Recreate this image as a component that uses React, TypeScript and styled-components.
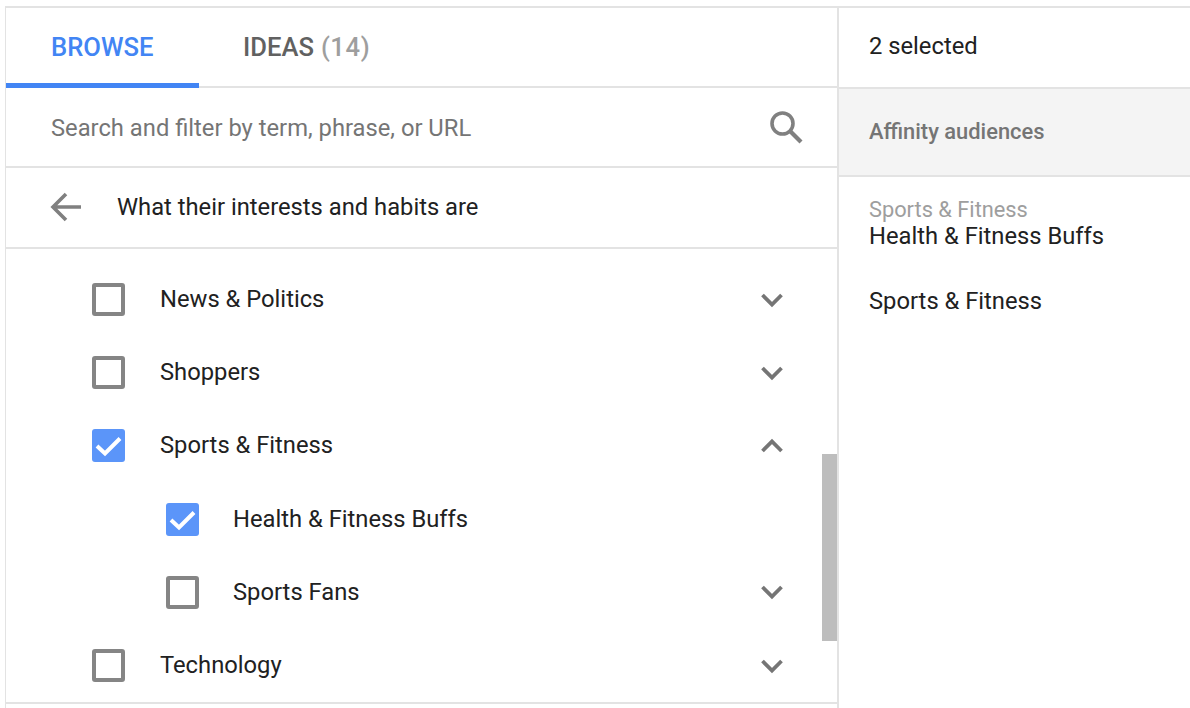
import React from "react";
import styled, { createGlobalStyle } from "styled-components";

const Global = createGlobalStyle`
  html, body { margin: 0; padding: 0; background: #fff; overflow: hidden; }
  body { font-family: Roboto, "Liberation Sans", sans-serif; }
`;

const Page = styled.div`
  width: 1190px;
  height: 708px;
  box-sizing: border-box;
  padding: 6px 0 0 5px;
  overflow: hidden;
  display: flex;
  background: #fff;
`;

const LeftPanel = styled.div`
  width: 834px;
  height: 702px;
  box-sizing: border-box;
  border: 2px solid #e3e3e3;
  border-left-width: 1px;
  border-bottom: none;
  display: flex;
  flex-direction: column;
  flex: none;
`;

const TabBar = styled.div`
  height: 80px;
  box-sizing: border-box;
  border-bottom: 2px solid #e3e3e3;
  display: flex;
  flex: none;
`;

const Tab = styled.div<{ $active?: boolean }>`
  height: 80px;
  box-sizing: border-box;
  padding-top: 2px;
  display: flex;
  align-items: center;
  font-size: 25.6px;
  font-weight: 500;
  color: ${(p) => (p.$active ? "#4285f4" : "#616161")};
  border-bottom: ${(p) => (p.$active ? "5px solid #4285f4" : "5px solid transparent")};
  ${(p) => (p.$active ? "width: 193px; padding-left: 45px;" : "padding-left: 44px;")}
`;

const Count = styled.span`
  color: #9e9e9e;
  margin-left: 7px;
  letter-spacing: 0.6px;
`;

const SearchRow = styled.div`
  height: 80px;
  box-sizing: border-box;
  border-bottom: 2px solid #e3e3e3;
  padding: 0 34px 0 45px;
  display: flex;
  align-items: center;
  justify-content: space-between;
  flex: none;
  font-size: 23.75px;
  color: #757575;
`;

const SearchText = styled.span`
  margin-top: 2px;
`;

const BackRow = styled.div`
  height: 81px;
  box-sizing: border-box;
  border-bottom: 2px solid #e3e3e3;
  padding-left: 44px;
  padding-bottom: 2px;
  display: flex;
  align-items: center;
  gap: 35px;
  flex: none;
  font-size: 23.75px;
  color: #212121;
`;

const ListArea = styled.div`
  flex: 1;
  position: relative;
  overflow: hidden;
  padding-top: 14px;
  box-sizing: border-box;
  border-bottom: 2px solid #e3e3e3;
`;

const Footer = styled.div`
  height: 4px;
  flex: none;
`;

const Row = styled.div<{ $nested?: boolean }>`
  height: 73.2px;
  display: flex;
  align-items: center;
  padding-left: ${(p) => (p.$nested ? 160 : 86)}px;
  padding-right: 53px;
  font-size: 23.75px;
  color: #212121;
`;

const Box = styled.div<{ $checked?: boolean }>`
  width: 33px;
  height: 33px;
  box-sizing: border-box;
  border-radius: 3px;
  flex: none;
  display: flex;
  align-items: center;
  justify-content: center;
  background: ${(p) => (p.$checked ? "#5b95f9" : "#fff")};
  border: ${(p) => (p.$checked ? "none" : "4px solid #858585")};
`;

const Label = styled.div<{ $nested?: boolean }>`
  margin-left: ${(p) => (p.$nested ? 34 : 35)}px;
  margin-top: -1px;
  flex: 1;
`;

const Scrollbar = styled.div`
  position: absolute;
  right: 0;
  top: 205px;
  width: 15px;
  height: 187px;
  background: #bdbdbd;
`;

const RightPanel = styled.div`
  flex: 1;
  display: flex;
  flex-direction: column;
  border-top: 2px solid #e3e3e3;
  height: 698px;
  box-sizing: border-box;
`;

const SelectedHead = styled.div`
  height: 79px;
  box-sizing: border-box;
  padding: 0 0 3px 30px;
  display: flex;
  align-items: center;
  font-size: 23.75px;
  color: #212121;
  flex: none;
`;

const GroupHead = styled.div`
  height: 90px;
  box-sizing: border-box;
  background: #f4f4f4;
  border-top: 2px solid #e3e3e3;
  border-bottom: 2px solid #e3e3e3;
  padding: 0 0 2px 30px;
  display: flex;
  align-items: center;
  font-size: 21.9px;
  font-weight: 500;
  color: #757575;
  flex: none;
`;

const Item = styled.div`
  padding: 20px 0 0 30px;
  display: flex;
  flex-direction: column;
  font-size: 23.75px;
  line-height: 28px;
  color: #212121;
`;

const ItemParent = styled.div`
  font-size: 21.8px;
  line-height: 25px;
  color: #9e9e9e;
`;

const PlainItem = styled(Item)`
  padding-top: 37px;
`;

const Chevron = ({ up }: { up?: boolean }) => (
  <svg width="24" height="16" viewBox="0 0 24 16" fill="none">
    <path
      d={up ? "M2.5 13 L12 3.5 L21.5 13" : "M2.5 3 L12 12.5 L21.5 3"}
      stroke="#757575"
      strokeWidth="3.8"
    />
  </svg>
);

const Check = () => (
  <svg width="33" height="33" viewBox="0 0 33 33" fill="none">
    <path d="M5 17 L13 24.5 L28 9.5" stroke="#fff" strokeWidth="4" />
  </svg>
);

const rows = [
  { label: "News & Politics", chevron: "down" },
  { label: "Shoppers", chevron: "down" },
  { label: "Sports & Fitness", chevron: "up", checked: true },
  { label: "Health & Fitness Buffs", checked: true, nested: true },
  { label: "Sports Fans", chevron: "down", nested: true },
  { label: "Technology", chevron: "down" },
];

export default function App() {
  return (
    <Page>
      <Global />
      <LeftPanel>
        <TabBar>
          <Tab $active>BROWSE</Tab>
          <Tab>
            IDEAS<Count>(14)</Count>
          </Tab>
        </TabBar>
        <SearchRow>
          <SearchText>Search and filter by term, phrase, or URL</SearchText>
          <svg width="33" height="33" viewBox="0 0 33 33" fill="none">
            <circle cx="12.5" cy="12.5" r="10.5" stroke="#808080" strokeWidth="3.6" />
            <path d="M20 20 L31 31" stroke="#808080" strokeWidth="4.2" />
          </svg>
        </SearchRow>
        <BackRow>
          <svg width="32" height="30" viewBox="0 0 32 30" fill="none">
            <path d="M16 2 L3 15 L16 28 M3 15 H31" stroke="#808080" strokeWidth="3.6" />
          </svg>
          <span>What their interests and habits are</span>
        </BackRow>
        <ListArea>
          {rows.map((r) => (
            <Row key={r.label} $nested={r.nested}>
              <Box $checked={r.checked}>{r.checked && <Check />}</Box>
              <Label $nested={r.nested}>{r.label}</Label>
              {r.chevron && <Chevron up={r.chevron === "up"} />}
            </Row>
          ))}
          <Scrollbar />
        </ListArea>
        <Footer />
      </LeftPanel>
      <RightPanel>
        <SelectedHead>2 selected</SelectedHead>
        <GroupHead>Affinity audiences</GroupHead>
        <Item>
          <ItemParent>Sports &amp; Fitness</ItemParent>
          Health &amp; Fitness Buffs
        </Item>
        <PlainItem>Sports &amp; Fitness</PlainItem>
      </RightPanel>
    </Page>
  );
}
